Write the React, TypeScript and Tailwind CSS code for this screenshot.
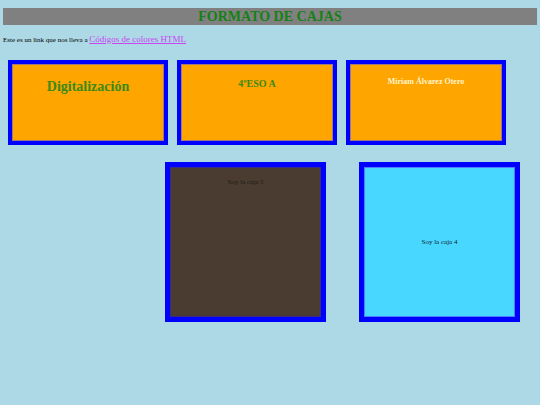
export default function App() {
  return (
    <div className="w-[540px] h-[405px] bg-[#add8e6] px-[3px] pt-[8px] font-['Liberation_Serif',serif] overflow-hidden">
      {/* Header */}
      <div className="h-[17px] bg-[#808080] flex items-center justify-center">
        <h1 className="text-[14px] leading-none font-bold text-[#168016]">FORMATO DE CAJAS</h1>
      </div>

      {/* Link line */}
      <p className="mt-[9px] h-[10px] flex items-end text-[7px] leading-none text-black">
        <span>Este es un link que nos lleva a&nbsp;</span>
        <a href="#" className="text-[9px] text-[#c646f2] underline">Códigos de colores HTML</a>
      </p>

      {/* First row */}
      <div className="mt-[16px] pl-[5px] flex gap-[9px]">
        <div className="w-[160px] h-[85px] border-4 border-[#0000ff] bg-[#ffa500] shadow-[inset_0_0_0_1px_#a07a80] flex justify-center pt-[16px]">
          <span className="text-[14px] leading-none font-bold text-[#3a8a16]">Digitalización</span>
        </div>
        <div className="w-[160px] h-[85px] border-4 border-[#0000ff] bg-[#ffa500] shadow-[inset_0_0_0_1px_#a07a80] flex justify-center pt-[15px]">
          <span className="text-[10px] leading-none font-bold text-[#3a8a16]">4ºESO A</span>
        </div>
        <div className="w-[160px] h-[85px] border-4 border-[#0000ff] bg-[#ffa500] shadow-[inset_0_0_0_1px_#a07a80] flex justify-center pt-[14px]">
          <span className="text-[8px] leading-none font-bold text-[#fff4cc]">Miriam Álvarez Otero</span>
        </div>
      </div>

      {/* Second row */}
      <div className="mt-[17px] pl-[162px] flex gap-[33px]">
        <div className="w-[161px] h-[160px] border-[5px] border-[#0000ff] bg-[#4a3c30] shadow-[inset_0_0_0_1px_#3a2c80] flex justify-center pt-[12px]">
          <span className="text-[7px] leading-none text-[#1e1a16]">Soy la caja 5</span>
        </div>
        <div className="w-[161px] h-[160px] border-[5px] border-[#0000ff] bg-[#48d8ff] shadow-[inset_0_0_0_1px_#4a80ff] flex items-center justify-center">
          <span className="text-[7px] leading-none text-[#102030]">Soy la caja 4</span>
        </div>
      </div>
    </div>
  )
}
